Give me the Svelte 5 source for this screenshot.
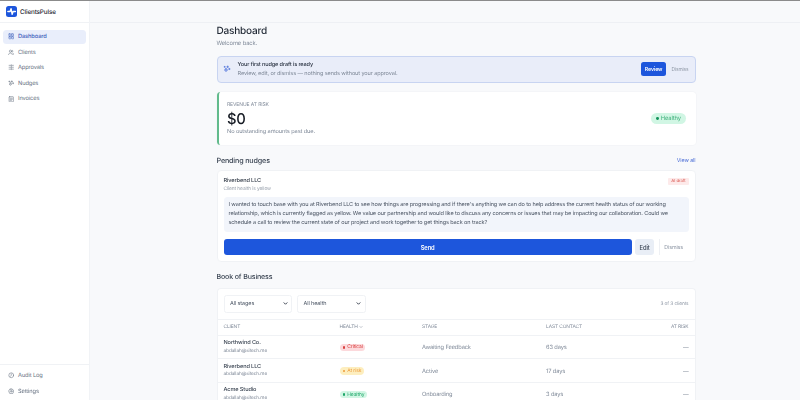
<script>
  const navTop = [
    { label: 'Dashboard', icon: 'dash', active: true },
    { label: 'Clients', icon: 'users' },
    { label: 'Approvals', icon: 'list' },
    { label: 'Nudges', icon: 'spark' },
    { label: 'Invoices', icon: 'invoice' }
  ];
  const navBottom = [
    { label: 'Audit Log', icon: 'clock' },
    { label: 'Settings', icon: 'gear' }
  ];
  const clients = [
    { name: 'Northwind Co.', email: 'abdallah@sitech.me', health: 'Critical', tone: 'critical', stage: 'Awaiting Feedback', last: '63 days' },
    { name: 'Riverbend LLC', email: 'abdallah@sitech.me', health: 'At risk', tone: 'risk', stage: 'Active', last: '17 days' },
    { name: 'Acme Studio', email: 'abdallah@sitech.me', health: 'Healthy', tone: 'healthy', stage: 'Onboarding', last: '3 days' }
  ];
</script>

{#snippet icon(name)}
  <svg class="ico" viewBox="0 0 24 24" fill="none" stroke="currentColor" stroke-width="2" stroke-linecap="round" stroke-linejoin="round">
    {#if name === 'dash'}
      <rect x="3.500" y="3" width="7" height="8" rx="1" /><rect x="13.500" y="3" width="7" height="8" rx="1" /><rect x="3.500" y="13.500" width="7" height="8" rx="1" /><rect x="13.500" y="13.500" width="7" height="8" rx="1" />
    {:else if name === 'users'}
      <circle cx="9" cy="8" r="4" /><path d="M2 21c0-4 3-6 7-6s7 2 7 6M16 4.500a4 4 0 0 1 0 7M18 15.500c2.500.8 4 2.700 4 5.500" />
    {:else if name === 'list'}
      <path d="M4 5h6M4 12h6M4 19h6M15 5h5M15 12h5M15 19h5M12.500 3v18" />
    {:else if name === 'spark'}
      <path d="M14 3v5M11.500 5.500h5M19 10v4M17 12h4M9 10l1.500 3.500L14 15l-3.500 1.500L9 20l-1.500-3.500L4 15l3.500-1.500zM5 4v3M3.500 5.500h3" />
    {:else if name === 'invoice'}
      <rect x="4" y="2.500" width="16" height="19" rx="2" /><path d="M8 8h8M8 12h8M8 16h5" />
    {:else if name === 'clock'}
      <circle cx="12" cy="12" r="9" /><path d="M12 7v5l-3 4" />
    {:else if name === 'gear'}
      <circle cx="12" cy="12" r="3" /><path d="M12 2.500l2 3 3.500-.8.8 3.500 3.200 1.800-1.500 2.500 1.500 2.500-3.200 1.800-.8 3.500-3.500-.8-2 3-2-3-3.500.8-.8-3.500-3.200-1.800L4 12 2.500 9.500l3.200-1.800.8-3.500 3.500.8z" />
    {/if}
  </svg>
{/snippet}

<div class="shell">
  <aside class="side">
    <div class="brand">
      <span class="logo">
        <svg viewBox="0 0 24 24" fill="none" stroke="#fff" stroke-width="3" stroke-linecap="round" stroke-linejoin="round"><path d="M4 12h5l2-6 2.500 12 2-6h5" /></svg>
      </span>
      <span class="brand-name">ClientsPulse</span>
    </div>
    <nav class="nav">
      {#each navTop as item}
        <div class="nav-item" class:active={item.active}>{@render icon(item.icon)}<span>{item.label}</span></div>
      {/each}
    </nav>
    <nav class="nav nav-bottom">
      {#each navBottom as item}
        <div class="nav-item">{@render icon(item.icon)}<span>{item.label}</span></div>
      {/each}
    </nav>
  </aside>

  <div class="main">
    <div class="topbar"></div>
    <main class="content">
      <h1>Dashboard</h1>
      <p class="welcome">Welcome back.</p>

      <section class="banner">
        <svg class="banner-ico" viewBox="0 0 24 24" fill="none" stroke="currentColor" stroke-width="2" stroke-linecap="round" stroke-linejoin="round"><path d="M14 3v5M11.500 5.500h5M19 10v4M17 12h4M9 10l1.500 3.500L14 15l-3.500 1.500L9 20l-1.500-3.500L4 15l3.500-1.500zM5 4v3M3.500 5.500h3" /></svg>
        <div class="banner-text">
          <div class="banner-title">Your first nudge draft is ready</div>
          <div class="banner-sub">Review, edit, or dismiss — nothing sends without your approval.</div>
        </div>
        <button class="review">Review</button>
        <button class="ghost">Dismiss</button>
      </section>

      <section class="revenue">
        <div class="rev-left">
          <div class="rev-label">REVENUE AT RISK</div>
          <div class="rev-value">$0</div>
          <div class="rev-note">No outstanding amounts past due.</div>
        </div>
        <span class="pill-big"><i></i>Healthy</span>
      </section>

      <div class="section-head">
        <h2>Pending nudges</h2>
        <span class="link">View all</span>
      </div>

      <section class="card nudge">
        <div class="nudge-head">
          <div>
            <div class="nudge-name">Riverbend LLC</div>
            <div class="nudge-sub">Client health is yellow</div>
          </div>
          <span class="ai">AI draft</span>
        </div>
        <p class="draft">I wanted to touch base with you at Riverbend LLC to see how things are progressing and if there's anything we can do to help address the current health status of our working relationship, which is currently flagged as yellow. We value our partnership and would like to discuss any concerns or issues that may be impacting our collaboration. Could we schedule a call to review the current state of our project and work together to get things back on track?</p>
        <div class="actions">
          <button class="send">Send</button>
          <button class="edit">Edit</button>
          <span class="divider"></span>
          <button class="ghost dismiss">Dismiss</button>
        </div>
      </section>

      <h2 class="book">Book of Business</h2>

      <section class="card table-card">
        <div class="filters">
          <div class="select">All stages<svg viewBox="0 0 10 10" fill="none" stroke="currentColor" stroke-width="1.800" stroke-linecap="round" stroke-linejoin="round"><path d="M2 3.500l3 3 3-3" /></svg></div>
          <div class="select">All health<svg viewBox="0 0 10 10" fill="none" stroke="currentColor" stroke-width="1.800" stroke-linecap="round" stroke-linejoin="round"><path d="M2 3.500l3 3 3-3" /></svg></div>
          <span class="count">3 of 3 clients</span>
        </div>
        <div class="row thead">
          <span>CLIENT</span>
          <span>HEALTH <svg class="sort" viewBox="0 0 10 10" fill="none" stroke="currentColor" stroke-width="1.200" stroke-linecap="round" stroke-linejoin="round"><path d="M2 3.500l3 3 3-3" /></svg></span>
          <span>STAGE</span>
          <span>LAST CONTACT</span>
          <span class="right">AT RISK</span>
        </div>
        {#each clients as c}
          <div class="row tbody">
            <div>
              <div class="c-name">{c.name}</div>
              <div class="c-mail">{c.email}</div>
            </div>
            <div class="pill-cell"><span class="pill {c.tone}"><i></i>{c.health}</span></div>
            <div class="muted">{c.stage}</div>
            <div class="muted">{c.last}</div>
            <div class="muted right">—</div>
          </div>
        {/each}
      </section>
    </main>
  </div>
</div>

<style>
  :global(body) {
    margin: 0;
    background: #f8f9fb;
    font-family: Inter, "Liberation Sans", sans-serif;
    text-rendering: geometricPrecision;
    overflow: hidden;
  }
  .shell * {
    letter-spacing: -0.02em;
  }
  .shell {
    display: flex;
    height: 400px;
    overflow: hidden;
    border-top: 1px solid #8b8b8b;
    box-sizing: border-box;
    filter: blur(0.3px);
  }
  .side {
    width: 90px;
    flex: none;
    background: #fff;
    border-right: 1px solid #f1f3f6;
    box-sizing: border-box;
    display: flex;
    flex-direction: column;
  }
  .brand {
    height: 21px;
    border-bottom: 1px solid #f0f2f5;
    display: flex;
    align-items: center;
    gap: 3.500px;
    padding-left: 5.500px;
    flex: none;
  }
  .logo {
    width: 11px;
    height: 11px;
    border-radius: 2.500px;
    background: #1d56dc;
    display: flex;
  }
  .brand-name {
    font-size: 6.300px;
    font-weight: 500;
    color: #1f2733;
  }
  .nav {
    display: flex;
    flex-direction: column;
    gap: 1.600px;
    padding: 6.500px 3px 0 2.500px;
  }
  .nav-bottom {
    margin-top: auto;
    border-top: 1px solid #f0f2f5;
    padding-top: 3.500px;
    padding-bottom: 2px;
  }
  .nav-item {
    height: 14px;
    display: flex;
    align-items: center;
    gap: 4px;
    padding-left: 5px;
    border-radius: 3px;
    font-size: 5.700px;
    color: #667181;
  }
  .nav-item.active {
    background: #e9eefb;
    color: #3f62bd;
    font-weight: 500;
    border-radius: 3.500px;
  }
  .ico {
    width: 6.500px;
    height: 6.500px;
    flex: none;
  }
  .main {
    flex: 1;
    min-width: 0;
  }
  .topbar {
    height: 21px;
    border-bottom: 1px solid #eef0f4;
  }
  .content {
    width: 479px;
    margin-left: 126.500px;
  }
  h1 {
    margin: 0;
    padding-top: 1.500px;
    font-size: 10.050px;
    line-height: 13px;
    font-weight: 500;
    color: #1f2733;
  }
  .welcome {
    margin: 2px 0 0;
    font-size: 5.800px;
    line-height: 8px;
    color: #7f8998;
  }
  .banner {
    margin-top: 8.500px;
    height: 26.700px;
    box-sizing: border-box;
    display: flex;
    align-items: center;
    background: #e9edf9;
    border: 1px solid #c8d4f1;
    border-radius: 4px;
    padding: 0 6px 0 5.500px;
  }
  .banner-ico {
    width: 8px;
    height: 8px;
    color: #3d63d8;
    flex: none;
  }
  .banner-text {
    flex: 1;
    margin-left: 6.500px;
    padding-top: 0.500px;
  }
  .banner-title {
    font-size: 5.550px;
    line-height: 8px;
    font-weight: 500;
    color: #2a3342;
  }
  .banner-sub {
    margin-top: 1px;
    font-size: 5.550px;
    line-height: 8px;
    color: #7f8998;
  }
  button {
    font-family: inherit;
    border: 0;
    padding: 0;
  }
  .review {
    width: 25px;
    height: 14px;
    border-radius: 2.500px;
    background: #1d56dc;
    color: #fff;
    font-size: 5.200px;
    font-weight: 600;
  }
  .ghost {
    background: transparent;
    color: #8d96a4;
    font-size: 4.800px;
    margin-left: 5.500px;
  }
  .revenue {
    margin-top: 9.800px;
    height: 52.600px;
    box-sizing: border-box;
    background: #fff;
    border-radius: 3.500px;
    border-left: 2px solid #62bb8c;
    box-shadow: 0 0 0 .5px #f0f2f5;
    display: flex;
    align-items: center;
    justify-content: space-between;
    padding: 0 10px 0 8.500px;
  }
  .rev-label {
    font-size: 5px;
    line-height: 7px;
    color: #7f8998;
  }
  .rev-value {
    margin-top: 2.500px;
    font-size: 14.800px;
    letter-spacing: -0.300px;
    line-height: 16px;
    font-weight: 500;
    color: #161b24;
  }
  .rev-note {
    margin-top: 0.500px;
    font-size: 5.650px;
    line-height: 8px;
    color: #7f8998;
  }
  .pill-big {
    display: inline-flex;
    align-items: center;
    gap: 2.300px;
    height: 10.600px;
    padding: 0 4.500px;
    border-radius: 6px;
    background: #d1f6e4;
    color: #3eaf7a;
    font-size: 5.800px;
  }
  .pill-big i, .pill i {
    display: block;
    width: 2.800px;
    height: 2.800px;
    border-radius: 50%;
    background: currentColor;
  }
  .pill-big i { background: #12925a; }
  .section-head {
    margin-top: 10.700px;
    display: flex;
    justify-content: space-between;
    align-items: center;
    height: 10px;
  }
  h2 {
    margin: 0;
    font-size: 7.150px;
    line-height: 10px;
    font-weight: 500;
    color: #3a4452;
  }
  .link {
    font-size: 5.400px;
    color: #4d6fd6;
  }
  .card {
    background: #fff;
    border: 1px solid #f0f2f5;
    border-radius: 4px;
    box-sizing: border-box;
  }
  .nudge {
    margin-top: 4.500px;
    height: 91.500px;
    padding: 5.500px 6px 0;
  }
  .nudge-head {
    display: flex;
    justify-content: space-between;
    align-items: flex-start;
  }
  .nudge-name {
    font-size: 5.600px;
    line-height: 8px;
    font-weight: 500;
    color: #2f3845;
  }
  .nudge-sub {
    font-size: 4.850px;
    line-height: 8px;
    color: #99a1ad;
  }
  .ai {
    margin-top: 1.500px;
    padding: 0 3px;
    height: 7px;
    line-height: 7px;
    font-size: 4.300px;
    background: #fdeaea;
    color: #d9544d;
    border-radius: 1px;
  }
  .draft {
    margin: 4px 0 0;
    height: 35.700px;
    box-sizing: border-box;
    padding: 4.500px 5px 0;
    background: #f2f5fb;
    border-radius: 3.500px;
    font-size: 5.550px;
    line-height: 9px;
    color: #4a5463;
    overflow: hidden;
  }
  .actions {
    margin-top: 6.300px;
    display: flex;
    align-items: center;
    height: 16.700px;
  }
  .send {
    flex: 1;
    height: 16.700px;
    background: #1d56dc;
    color: #fff;
    font-size: 5.800px;
    font-weight: 600;
    border-radius: 3px;
  }
  .edit {
    width: 19.500px;
    height: 16.700px;
    margin-left: 3px;
    border-radius: 3px;
    background: #e9eef6;
    color: #3c4655;
    font-size: 5.800px;
    font-weight: 500;
  }
  .divider {
    width: 1px;
    height: 16px;
    margin-left: 4.500px;
    background: #eef0f4;
  }
  .dismiss {
    margin: 0 5.500px 0 4.500px;
    font-size: 5.300px;
  }
  .book {
    margin-top: 10.300px;
    font-size: 7.050px;
  }
  .table-card {
    margin-top: 5.700px;
    border-bottom: 0;
  }
  .filters {
    display: flex;
    align-items: center;
    gap: 5px;
    height: 31px;
    padding: 0 6px;
    border-bottom: 1px solid #f0f2f5;
    box-sizing: border-box;
  }
  .select {
    width: 68.500px;
    height: 18.500px;
    box-sizing: border-box;
    display: flex;
    align-items: center;
    justify-content: space-between;
    padding: 0 3.500px 0 5.500px;
    border: 1px solid #f0f2f5;
    border-radius: 2.500px;
    font-size: 5.500px;
    color: #4d5766;
  }
  .select svg {
    width: 5px;
    height: 5px;
    color: #2a3342;
  }
  .count {
    margin-left: auto;
    font-size: 4.800px;
    color: #8d96a4;
  }
  .row {
    display: grid;
    grid-template-columns: 116px 82.500px 124px 1fr 40px;
    align-items: center;
    padding: 0 6px;
    border-bottom: 1px solid #f0f2f5;
    box-sizing: border-box;
  }
  .thead {
    height: 16px;
    font-size: 4.850px;
    color: #7f8998;
  }
  .sort {
    width: 4px;
    height: 4px;
    vertical-align: -0.500px;
  }
  .tbody {
    height: 23.700px;
    padding-top: 0.500px;
  }
  .c-name {
    font-size: 5.600px;
    line-height: 7.500px;
    font-weight: 500;
    color: #3a4452;
  }
  .c-mail {
    font-size: 4.750px;
    line-height: 7px;
    color: #7f8998;
  }
  .muted {
    font-size: 5.700px;
    color: #7f8998;
  }
  .right {
    text-align: right;
  }
  .pill-cell {
    display: flex;
  }
  .pill {
    display: inline-flex;
    align-items: center;
    gap: 2px;
    height: 7.500px;
    padding: 0 2.500px 0 3px;
    border-radius: 4px;
    font-size: 4.950px;
  }
  .pill.critical { background: #fcd9dc; color: #d9413f; }
  .pill.risk { background: #fdeebf; color: #ec9a3a; }
  .pill.healthy { background: #d1f6e4; color: #1ba567; }
</style>
